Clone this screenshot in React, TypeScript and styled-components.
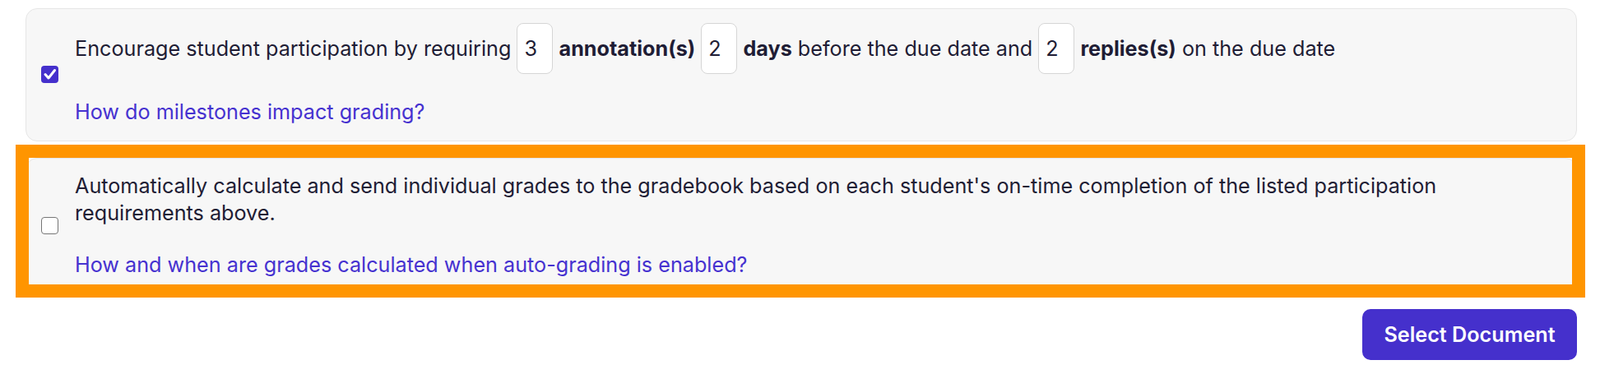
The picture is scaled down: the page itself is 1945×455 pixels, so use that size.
import styled, { createGlobalStyle } from "styled-components";

const GlobalStyle = createGlobalStyle`
  body {
    margin: 0;
    background: #ffffff;
    font-family: Inter, "Noto Sans", "Liberation Sans", sans-serif;
    color: #1f1d35;
  }
`;

const Page = styled.div`
  display: flex;
  flex-direction: column;
  padding: 10px 28px 0 31px;
`;

const Card = styled.div`
  display: flex;
  align-items: center;
  gap: 20px;
  padding: 17px 18px 18px 18px;
  background: #f7f7f7;
  border: 1px solid #e6e6e6;
  border-radius: 14px;
`;

const HighlightSlot = styled.div`
  position: relative;
  margin-top: 20px;
`;

const HighlightFrame = styled.div`
  position: absolute;
  top: -16px;
  left: -12px;
  right: -10px;
  bottom: -4px;
  border: 16px solid #ff9500;
  pointer-events: none;
`;

const CheckBox = styled.span<{ $checked?: boolean }>`
  flex: 0 0 auto;
  display: flex;
  align-items: center;
  justify-content: center;
  width: 21px;
  height: 21px;
  box-sizing: border-box;
  border-radius: 4px;
  border: ${(p) => (p.$checked ? "none" : "1.5px solid #767676")};
  background: ${(p) => (p.$checked ? "#4530cc" : "#ffffff")};
`;

const Body = styled.div`
  display: flex;
  flex-direction: column;
  flex: 1;
`;

const Sentence = styled.p`
  margin: 0;
  font-size: 25.2px;
  line-height: 33px;
  color: #1f1d35;
`;

const Strong = styled.b`
  font-weight: 700;
`;

const NumberInput = styled.input`
  width: 44px;
  height: 62px;
  box-sizing: border-box;
  padding: 0 0 0 8px;
  margin: 0;
  border: 1px solid #d6d6d6;
  border-radius: 8px;
  background: #ffffff;
  font-family: inherit;
  font-size: 25.2px;
  color: #1f1d35;
  outline: none;
`;

const HelpLink = styled.a`
  margin-top: 30px;
  font-size: 25.2px;
  line-height: 33px;
  color: #4632d0;
  text-decoration: none;
  cursor: pointer;
`;

const Footer = styled.div`
  display: flex;
  justify-content: flex-end;
  margin-top: 18px;
`;

const PrimaryButton = styled.button`
  width: 261px;
  height: 62px;
  border: none;
  border-radius: 10px;
  background: #4530cc;
  color: #ffffff;
  font-family: inherit;
  font-size: 25.2px;
  font-weight: 600;
  cursor: pointer;
`;

function Check({ checked }: { checked?: boolean }) {
  return (
    <CheckBox $checked={checked} role="checkbox" aria-checked={!!checked}>
      {checked && (
        <svg width="21" height="21" viewBox="0 0 21 21">
          <path
            d="M5 10.5 L9 15 L16.5 5.5"
            fill="none"
            stroke="#ffffff"
            strokeWidth="3"
            strokeLinecap="round"
            strokeLinejoin="round"
          />
        </svg>
      )}
    </CheckBox>
  );
}

export default function App() {
  return (
    <>
      <GlobalStyle />
      <Page>
        <Card>
          <Check checked />
          <Body>
            <Sentence>
              Encourage student participation by requiring{" "}
              <NumberInput defaultValue="3" /> <Strong>annotation(s)</Strong>{" "}
              <NumberInput defaultValue="2" /> <Strong>days</Strong> before the
              due date and <NumberInput defaultValue="2" />{" "}
              <Strong>replies(s)</Strong> on the due date
            </Sentence>
            <HelpLink>How do milestones impact grading?</HelpLink>
          </Body>
        </Card>
        <HighlightSlot>
          <Card>
            <Check />
            <Body>
              <Sentence>
                Automatically calculate and send individual grades to the
                gradebook based on each student's on-time completion of the
                listed participation requirements above.
              </Sentence>
              <HelpLink>
                How and when are grades calculated when auto-grading is enabled?
              </HelpLink>
            </Body>
          </Card>
          <HighlightFrame />
        </HighlightSlot>
        <Footer>
          <PrimaryButton>Select Document</PrimaryButton>
        </Footer>
      </Page>
    </>
  );
}
